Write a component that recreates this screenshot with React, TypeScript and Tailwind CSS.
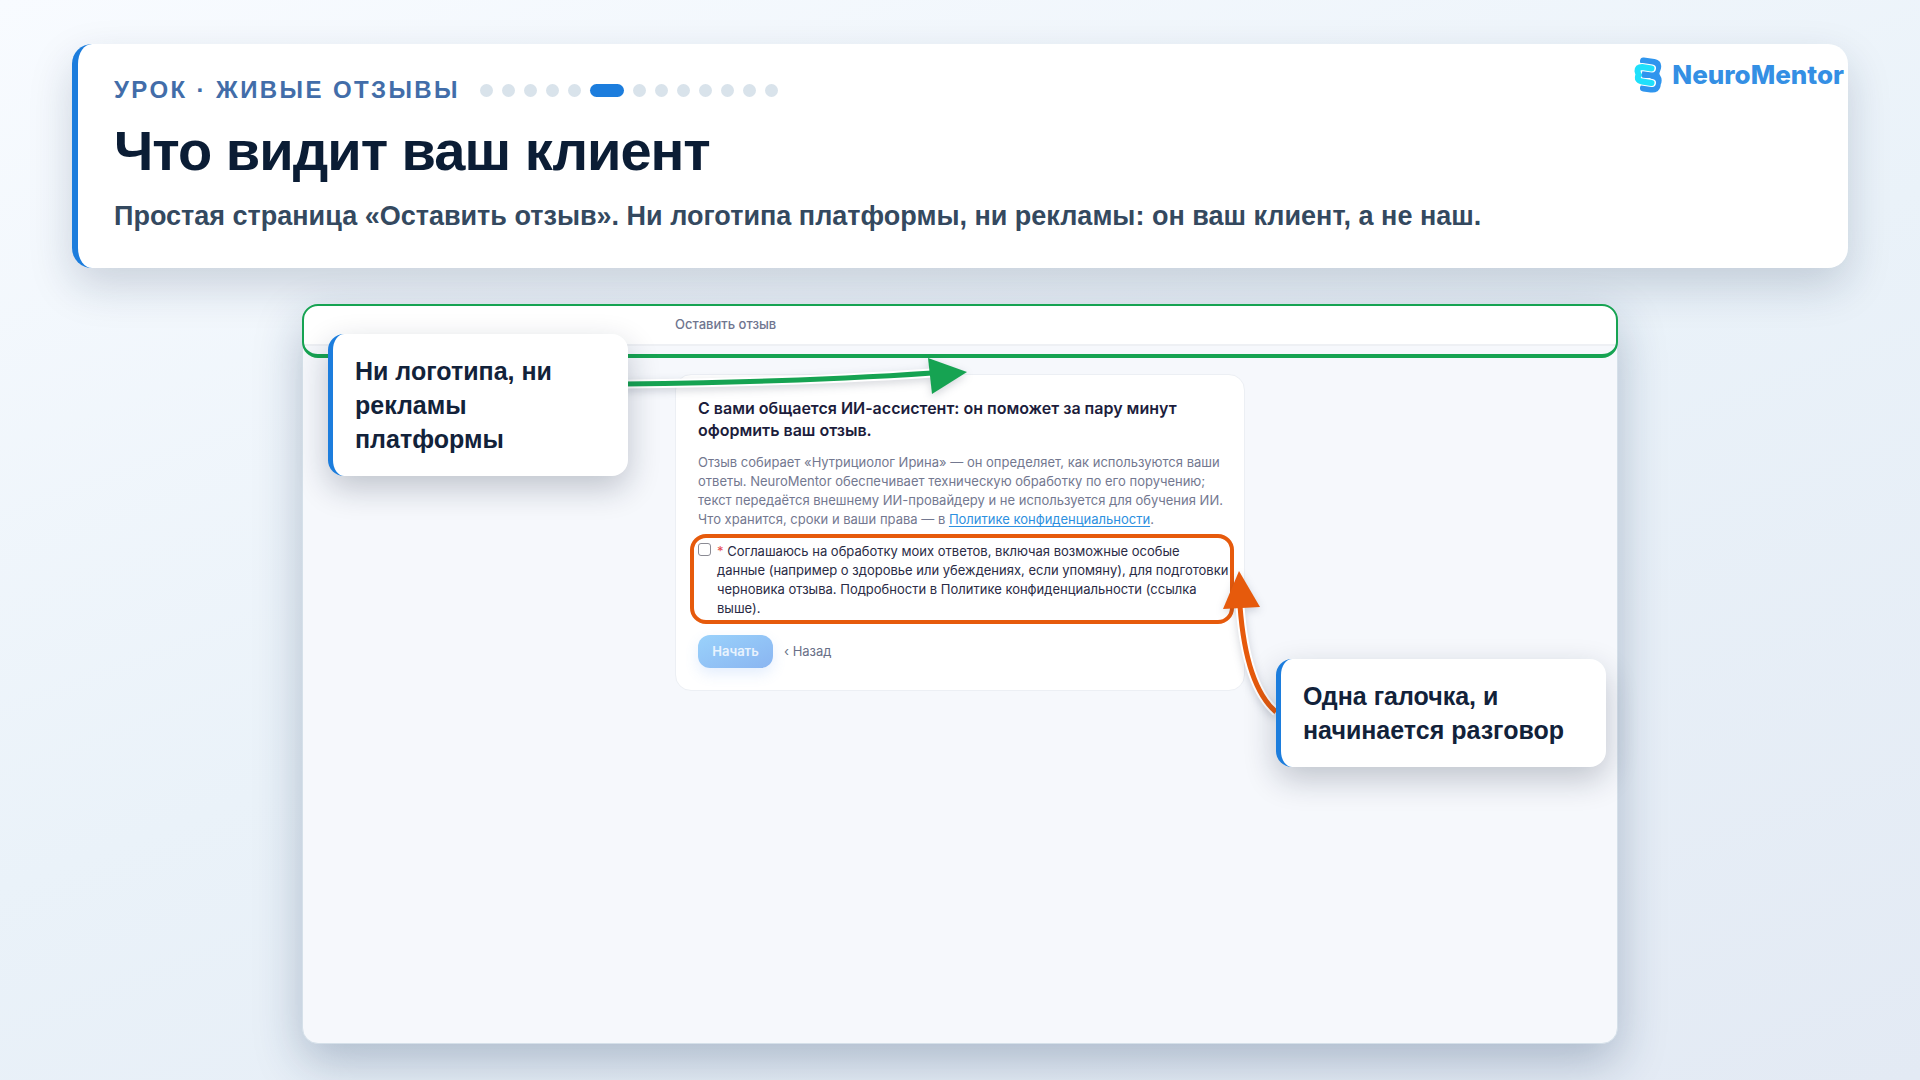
import React from 'react';

const STEPS = 13;
const CURRENT_STEP = 5;

const LogoMark = () => (
    <svg width="28" height="36" viewBox="0 0 28 36" fill="none" aria-hidden="true">
        <g stroke="#2f95ee" strokeWidth="7" strokeLinecap="round" strokeLinejoin="round">
            <path d="M9.5 4 L20 5.5 Q24.5 6.5 23.5 11 L22.5 14 Q21 17 23 20 Q25 23 23.5 26 L23 29 Q22 32.5 17 32 L9.5 31" />
            <path d="M10 17.5 L20 17.5" />
            <path d="M20 8 L20 29" />
        </g>
        <path d="M18 11.5 L8 10 Q3.5 10 3.5 14 Q4 17 5 18 Q3.5 19 4 22 Q5 24 8 24.5 L18 26" stroke="#fff" strokeWidth="8" strokeLinecap="round" strokeLinejoin="round" />
        <path d="M10 18 L20 18.5" stroke="#2f95ee" strokeWidth="5" strokeLinecap="round" />
        <path d="M17.5 11.5 L8 10 Q3.5 10 3.5 14 Q4 17 5 18 Q3.5 19 4 22 Q5 24 8 24.5 L17.5 26" stroke="#1fe0fb" strokeWidth="6" strokeLinecap="round" strokeLinejoin="round" />
    </svg>
);

const StepDots = () => (
    <div className="flex items-center gap-[9px]">
        {Array.from({ length: STEPS }, (_, i) => (
            <span
                key={i}
                className={i === CURRENT_STEP ? 'h-[13px] w-[34px] rounded-full bg-[#1c7ddd]' : 'size-[13px] rounded-full bg-[#d9e3eb]'}
            />
        ))}
    </div>
);

const LessonHeader = () => (
    <header className="relative rounded-[20px] border-l-[6px] border-[#1c7ddd] bg-white pt-[31px] pr-9 pb-[33px] pl-9 shadow-[0_18px_44px_rgba(15,40,70,0.18)]">
        <div className="flex items-center gap-5">
            <p className="text-2xl leading-[30px] font-bold tracking-widest text-[#426da9] uppercase">Урок · Живые отзывы</p>
            <StepDots />
        </div>
        <h1 className="mt-[14px] text-[56px] leading-[64px] font-bold tracking-[-1px] text-[#0b1d35]">Что видит ваш клиент</h1>
        <p className="mt-[14px] text-[27px] leading-[38px] font-bold text-[#34495f]">
            Простая страница «Оставить отзыв». Ни логотипа платформы, ни рекламы: он ваш клиент, а не наш.
        </p>
        <div className="absolute top-[13px] right-1 flex items-center gap-[10px] font-['Inter',sans-serif] text-[26px] leading-9 font-extrabold text-[#348fe4]">
            <LogoMark />
            NeuroMentor
        </div>
    </header>
);

const ConsentCard = () => (
    <form className="mx-auto mt-7 w-[570px] rounded-2xl border border-[#eceff4] bg-white p-[22px] text-[13px] leading-[19px]">
        <h2 className="text-base leading-[22px] font-semibold text-[#1c1d3c]">
            С вами общается ИИ-ассистент: он поможет за пару минут оформить ваш отзыв.
        </h2>
        <p className="-mr-2 mt-3 text-[#737890]">
            Отзыв собирает «Нутрициолог Ирина» — он определяет, как используются ваши ответы. NeuroMentor обеспечивает
            техническую обработку по его поручению; текст передаётся внешнему ИИ-провайдеру и не используется для
            обучения&nbsp;ИИ. Что хранится, сроки и ваши права — в{' '}
            <a href="#privacy" className="text-[#2d90e0] underline underline-offset-2">Политике конфиденциальности</a>.
        </p>
        <div className="relative -mr-2 mt-[13px] flex items-start gap-[6px]">
            <input id="consent" type="checkbox" className="mt-px size-[13px] shrink-0 appearance-none rounded-[3px] border border-[#8b8b94] bg-white" />
            <label htmlFor="consent" className="text-[#2a2b45]">
                <span className="text-[#e5484d]">*</span> Соглашаюсь на обработку моих ответов, включая возможные особые данные
                (например о здоровье или убеждениях, если упомяну), для подготовки черновика отзыва. Подробности в Политике
                конфиденциальности (ссылка выше).
            </label>
            <div className="pointer-events-none absolute -top-[8px] -right-1 -bottom-[6px] -left-[8px] rounded-2xl border-4 border-[#e65a0c]" />
        </div>
        <div className="mt-[17px] flex items-center gap-[11px]">
            <button type="button" className="h-[33px] w-[75px] rounded-xl bg-linear-to-br from-[#9ad2fb] to-[#8ab5f1] font-semibold text-white/80 shadow-[0_6px_14px_rgba(90,150,240,0.16)]">
                Начать
            </button>
            <button type="button" className="text-[#696f87]">‹ Назад</button>
        </div>
    </form>
);

interface CalloutProps {
    className: string;
    children: React.ReactNode;
}

const Callout: React.FC<CalloutProps> = ({ className, children }) => (
    <div className={`absolute rounded-2xl border-l-[5px] border-[#1c7ddd] bg-white px-[22px] py-5 text-[25px] leading-[34px] font-bold text-[#12223a] shadow-[0_12px_32px_rgba(15,30,55,0.24)] ${className}`}>
        {children}
    </div>
);

const Arrows = () => (
    <svg className="pointer-events-none absolute -top-px -left-px h-full w-full drop-shadow-[0_3px_4px_rgba(15,30,55,0.18)]" fill="none" aria-hidden="true">
        <path d="M322 80 Q500 78 630 69" stroke="#fff" strokeWidth="9" />
        <path d="M322 80 Q500 78 630 69" stroke="#16a352" strokeWidth="5" />
        <path d="M665 68 L626 54 L630 90 Z" fill="#16a352" />
        <path d="M974 408 Q944 382 938 302" stroke="#fff" strokeWidth="9" />
        <path d="M974 408 Q944 382 938 302" stroke="#e65a0c" strokeWidth="5" />
        <path d="M937 267 L921 305 L958 303 Z" fill="#e65a0c" />
    </svg>
);

const ClientPreview = () => (
    <main className="relative mx-auto mt-9 w-full max-w-[1316px] flex-1 rounded-2xl border border-[#d5e0e9] bg-[#f6f8fc] font-['Inter',sans-serif] shadow-[0_18px_48px_rgba(20,50,90,0.28)]">
        <div className="h-[41px] rounded-t-2xl border-b-2 border-[#eef0f4] bg-white">
            <p className="mx-auto w-[570px] pt-[9px] text-[13px] leading-[20px] font-medium text-[#6f758f]">Оставить отзыв</p>
        </div>
        <ConsentCard />
        <div className="pointer-events-none absolute -inset-x-px -top-px h-[54px] rounded-2xl border-2 border-b-4 border-[#16a352]" />
        <Arrows />
        <div className="font-['Liberation_Sans',Arial,sans-serif]">
            <Callout className="top-[29px] left-[25px] w-[300px]">Ни логотипа, ни рекламы платформы</Callout>
            <Callout className="top-[354px] right-[11px] w-[330px]">Одна галочка, и начинается разговор</Callout>
        </div>
    </main>
);

export default function App() {
    return (
        <div className="flex min-h-screen flex-col bg-linear-160 from-[#f8fbff] via-[#eaf2f9] to-[#e3eaf4] px-[72px] pt-11 pb-9 font-['Liberation_Sans',Arial,sans-serif]">
            <LessonHeader />
            <ClientPreview />
        </div>
    );
}
